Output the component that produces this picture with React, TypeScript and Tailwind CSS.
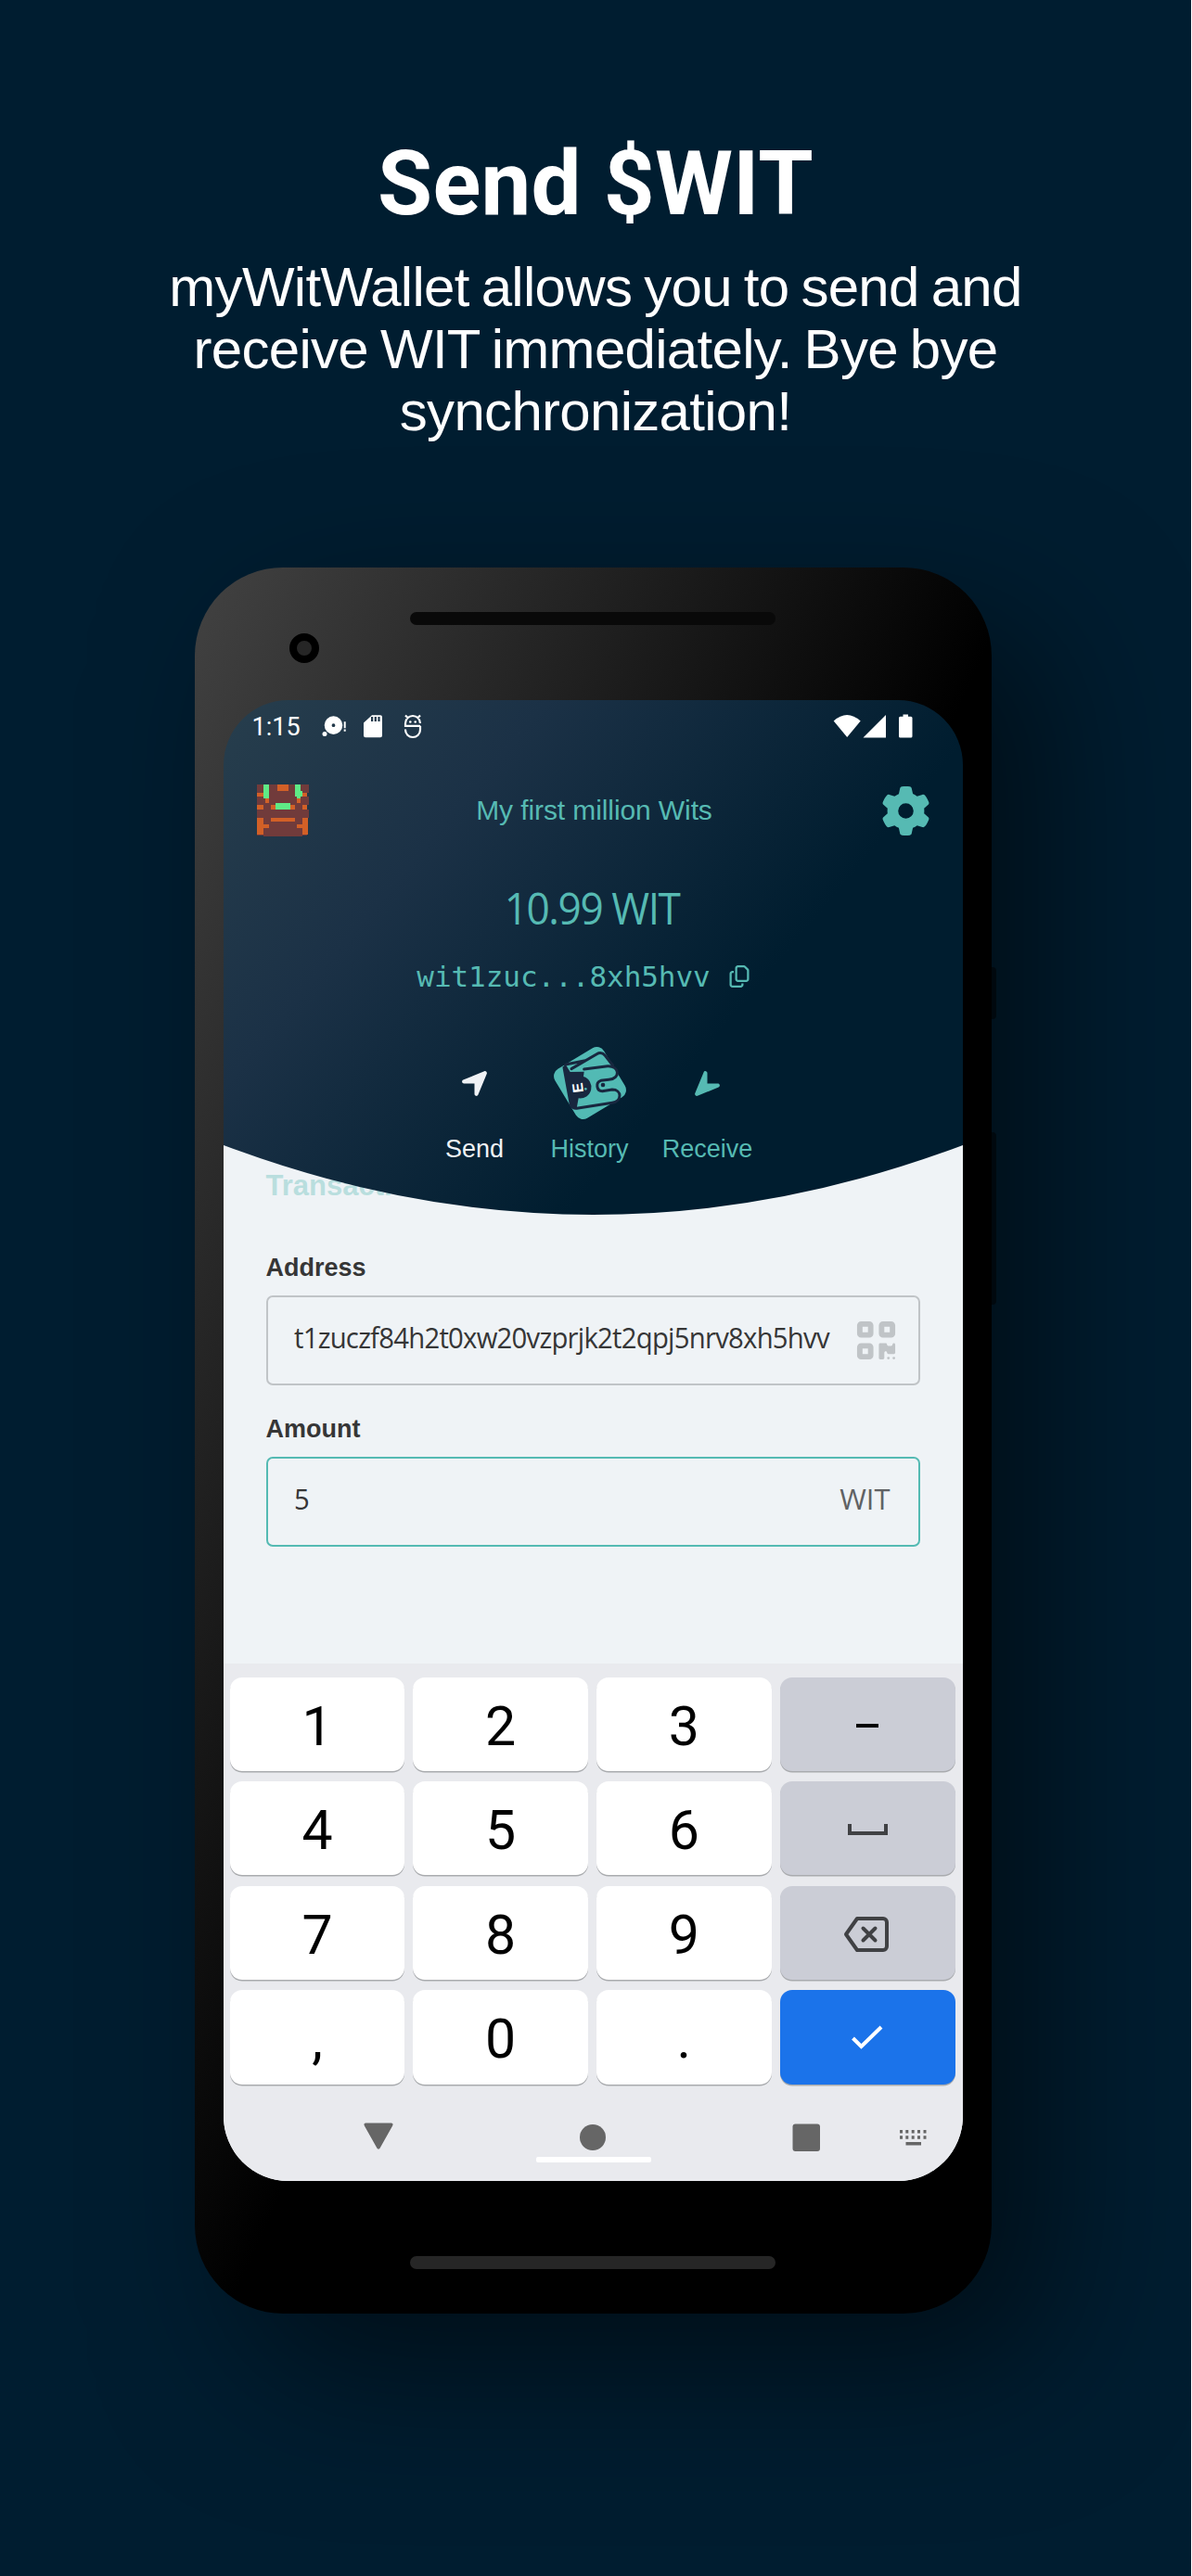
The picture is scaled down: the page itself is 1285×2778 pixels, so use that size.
import type { ReactNode } from 'react';
import { FaGear, FaLocationArrow, FaQrcode, FaRegCopy } from 'react-icons/fa6';

const SANS = "font-['Liberation_Sans',sans-serif]";

function Chest() {
  return (
    <svg width="58" height="58" viewBox="228 737 174 174" shapeRendering="crispEdges">
      <path fill="#713b3b" d="M230 740h168v26h-4v14h4v26h-4v14h4v28h-4v56h-15v5H252v-5h-22z" />
      <g fill="#d26027">
        <path d="M298 740h34v20h-34zM230 766h22v14h-22zM379 766h15v14h-15zM257 786h14v15h-14zM359 786h14v15h-14zM230 807h21v13h-21zM277 807h76v13h-76zM379 807h15v13h-15zM277 848h76v13h-76zM230 848h21v20h20v14h-20v21h-21zM379 848h16v55h-16v-21h-20v-14h20z" />
      </g>
      <path fill="#5fea86" d="M251 740h20v46h-20zM353 740h20v20h6v20h-6v6h-14v-6h-6zM291 801h47v20h-47z" />
    </svg>
  );
}

function StatusIcons() {
  return (
    <svg width="112" height="28" viewBox="0 0 112 28" fill="#fff">
      <path fillRule="evenodd" d="M12.500 2.300a9.800 9.800 0 1 1 0 19.600a9.800 9.800 0 0 1 0-19.600zm0 8a1.900 1.900 0 1 0 0 3.800a1.900 1.900 0 0 0 0-3.800z" />
      <circle cx="3" cy="21.500" r="2.500" />
      <path d="M23.700 8.300h2v7h-2zM23.700 16.500h2v2.200h-2z" />
      <path fillRule="evenodd" d="M54 1.300h9a2 2 0 0 1 2 2v20a2 2 0 0 1-2 2H47a2 2 0 0 1-2-2V9.500zM53 3v5h2.200V3zM56.700 3v5h2.200V3zM60.400 3v5h2.200V3z" />
      <g fill="none" stroke="#fff" strokeWidth="2.2">
        <path d="M106 12.800H90V10a8 8 0 0 1 16 0M90 16.500v.5a8 8 0 0 0 16 0v-4.200M90 1.500l3 3M106 1.500l-3 3" />
      </g>
      <circle cx="95.300" cy="8.500" r="1.300" />
      <circle cx="100.700" cy="8.500" r="1.300" />
    </svg>
  );
}

function SignalIcons() {
  return (
    <svg width="88" height="28" viewBox="0 0 88 28" fill="#fff">
      <path d="M.7 7.500Q15-5.500 29.700 7.500L15.200 25z" />
      <path d="M57 1v24.500H32.500z" />
      <path d="M75.500.5h5.500v2.300h3a1.500 1.500 0 0 1 1.500 1.500v19.700a1.500 1.500 0 0 1-1.500 1.500H72.500A1.500 1.500 0 0 1 71 24V4.300a1.500 1.500 0 0 1 1.500-1.500h3z" />
    </svg>
  );
}

function WalletLogo() {
  return (
    <svg width="84" height="84" viewBox="525 591 252 252">
      <rect x="558.5" y="624.5" width="185" height="185" rx="27" fill="#52bab4" transform="rotate(-31 651 717)" />
      <path d="M571 655q-5 2-4 12l22 121q3 10 13 12l6-1 6-33a36 36 0 0 0 16-70l2-16-45 1z" fill="#18273f" />
      <g fill="none" stroke="#18273f" strokeWidth="9" strokeLinecap="round" strokeLinejoin="round">
        <path d="M725 660l-25-32q-12-14-27-5l-82 48M572 657l64-13" />
        <path d="M632 672l76-10c40-2 42 42 4 44l-26 3c-18 6-14 34 5 34l32-5c32 0 32 38 0 43l-115 18q-14 1-19-12l-22-120" />
      </g>
      <circle cx="693" cy="723" r="7" fill="#18273f" />
      <circle cx="637" cy="736" r="4" fill="#52bab4" />
      <text x="0" y="0" transform="translate(630 746) rotate(-97)" fill="#fff" fontSize="48" fontWeight="700" fontFamily="Liberation Sans">E</text>
    </svg>
  );
}

function Key({ tone = 'bg-white', children }: { tone?: string; children: ReactNode }) {
  return (
    <button
      className={`flex items-center justify-center rounded-[13px] font-[Roboto,sans-serif] text-[59px] leading-none text-black shadow-[0_1.5px_0_#a9abae] ${tone}`}
    >
      {children}
    </button>
  );
}

const Digit = ({ children }: { children: string }) => <Key><span className="pt-[4px]">{children}</span></Key>;

function Keyboard() {
  return (
    <div className="flex h-[558px] flex-col bg-[#e9eaee] pt-[14.500px]">
      <div className="mr-[8px] ml-[7px] grid h-[439px] grid-cols-4 grid-rows-4 gap-x-[8.700px] gap-y-[11.300px]">
        <Digit>1</Digit>
        <Digit>2</Digit>
        <Digit>3</Digit>
        <Key tone="bg-[#cbcdd6]"><span className="mt-[4px] h-[4px] w-6 bg-black" /></Key>
        <Digit>4</Digit>
        <Digit>5</Digit>
        <Digit>6</Digit>
        <Key tone="bg-[#cbcdd6]">
          <span className="mt-[3px] h-[12px] w-[43px] border-4 border-t-0 border-[#404144]" />
        </Key>
        <Digit>7</Digit>
        <Digit>8</Digit>
        <Digit>9</Digit>
        <Key tone="bg-[#cbcdd6]">
          <svg className="mt-[3px] mr-[2px]" width="50" height="40" viewBox="0 0 50 40" fill="none" stroke="#404144" strokeWidth="4" strokeLinejoin="round">
            <path d="M15 3h28a4 4 0 0 1 4 4v26a4 4 0 0 1-4 4H15L3 20z" />
            <path d="M21.500 13.500l13 13M34.500 13.500l-13 13" strokeLinecap="round" />
          </svg>
        </Key>
        <Digit>,</Digit>
        <Digit>0</Digit>
        <Digit>.</Digit>
        <Key tone="bg-[#1b73ea]">
          <svg className="mt-[2px]" width="36" height="28" viewBox="0 0 36 28" fill="none" stroke="#fff" strokeWidth="4">
            <path d="M2.500 14l9 9L33 2" />
          </svg>
        </Key>
      </div>
      <svg className="mt-[28.500px]" width="797" height="70" viewBox="0 0 797 70" fill="#666">
        <path d="M153 13.500h28q2.500.5 1 3.200l-13.500 24q-1.500 1.800-3 0l-13.500-24q-1.500-2.700 1-3.200z" />
        <circle cx="398" cy="29" r="14" />
        <rect x="613.500" y="14.500" width="29.500" height="29.500" rx="3" />
        <path d="M729 21h3v3.500h-3zm6.300 0h3v3.500h-3zm6.400 0h3v3.500h-3zm6.300 0h3v3.500h-3zm6.500 0h3v3.500h-3zM729 27.300h3v3.500h-3zm6.300 0h3v3.500h-3zm6.400 0h3v3.500h-3zm6.300 0h3v3.500h-3zm6.500 0h3v3.500h-3zM735.500 34h16.500v3.500h-16.500z" />
        <rect x="337" y="50" width="124" height="6" rx="2" fill="#fff" />
      </svg>
    </div>
  );
}

function Header() {
  return (
    <header className="relative h-[555px] text-[#56bab3]">
      <span className={`${SANS} absolute top-[506px] left-[46px] text-[31px] leading-[36px] font-bold opacity-35`}>
        Transaction
      </span>
      <svg className="absolute inset-0" width="797" height="555" viewBox="0 0 797 555">
        <defs>
          <linearGradient id="header" gradientUnits="userSpaceOnUse" x1="0" y1="0" x2="490" y2="412">
            <stop offset="0" stopColor="#273e4d" />
            <stop offset=".42" stopColor="#1b3146" />
            <stop offset="1" stopColor="#001d2f" />
          </linearGradient>
        </defs>
        <path fill="url(#header)" d="M0 0h797v480Q398.500 630 0 480z" />
      </svg>
      <div className="relative flex h-full flex-col">
        <div className="flex h-[56px] items-center pt-[2px] pr-[52px] pl-[31px] text-white">
          <span className="w-[75px] font-[Roboto,sans-serif] text-[27px]">1:15</span>
          <StatusIcons />
          <span className="ml-auto"><SignalIcons /></span>
        </div>
        <div className="flex h-[126px] items-center justify-between pr-[35px] pl-[35px]">
          <Chest />
          <span className={`${SANS} pr-[2px] pb-[2px] text-[30px] tracking-[-0.100px]`}>My first million Wits</span>
          <FaGear size={55} className="w-[53px]" />
        </div>
        <p className="scale-x-[0.940] pr-[3px] text-center font-['Open_Sans',sans-serif] text-[47px] leading-[84px] tracking-[-1.500px]">10.99 WIT</p>
        <div className="flex h-[64px] items-center justify-center gap-[19px] pr-[20px]">
          <span className="pt-px font-['DejaVu_Sans_Mono',monospace] text-[31px] tracking-[-0.050px]">wit1zuc...8xh5hvv</span>
          <FaRegCopy size={24} />
        </div>
        <nav className={`${SANS} mt-[41px] flex justify-center pr-1 text-[27px]`}>
          <div className="flex w-[124px] flex-col items-center text-[#f0f2f5]">
            <span className="flex h-[84px] items-center"><FaLocationArrow size={33} /></span>
            <span className="mt-[9px]">Send</span>
          </div>
          <div className="flex w-[124px] flex-col items-center">
            <WalletLogo />
            <span className="mt-[9px]">History</span>
          </div>
          <div className="ml-[3px] flex w-[124px] flex-col items-center">
            <span className="flex h-[84px] items-center"><FaLocationArrow size={33} className="rotate-180" /></span>
            <span className="mt-[9px]">Receive</span>
          </div>
        </nav>
      </div>
    </header>
  );
}

function Form() {
  return (
    <form className={`${SANS} flex flex-1 flex-col px-[46px] pt-[37px] text-[#363636]`}>
      <label className="text-[27px] leading-[40px] font-bold">Address</label>
      <div className="mt-[10px] flex h-[97px] items-center justify-between rounded-[7px] border-2 border-[#c0c4c7] pr-[22px] pl-[28px]">
        <span className="w-[576px] origin-left scale-x-[0.945] pb-[7px] font-['Open_Sans',sans-serif] text-[31px] tracking-[-0.800px] whitespace-nowrap">
          t1zuczf84h2t0xw20vzprjk2t2qpj5nrv8xh5hvv
        </span>
        <FaQrcode size={47} className="shrink-0 text-[#c0c4c7]" />
      </div>
      <label className="mt-[27px] text-[27px] leading-[40px] font-bold">Amount</label>
      <div className="mt-[10px] flex h-[97px] items-center justify-between rounded-[7px] border-2 border-[#54bab3] pr-[30px] pb-[7px] pl-[28px] font-['Open_Sans',sans-serif] text-[31px]">
        <span className="origin-left scale-x-[0.943]">5</span>
        <span className="text-[#606264]">WIT</span>
      </div>
    </form>
  );
}

function Phone() {
  return (
    <div className="relative mt-[612px] ml-[209.500px] h-[1883px] w-[859.500px] rounded-[95px] bg-[linear-gradient(to_bottom_right,#424242,#3c3c3c_5%,#000_52%)] shadow-[60px_60px_160px_rgba(0,0,0,0.5)]">
      <span className="absolute top-[431px] left-full h-[56px] w-[5px] rounded-r-sm bg-black/50" />
      <span className="absolute top-[609px] left-full h-[186px] w-[5px] rounded-r-sm bg-black/50" />
      <span className="absolute top-[48px] left-[232px] h-[14px] w-[394px] rounded-full bg-[#090909]" />
      <span className="absolute top-[71px] left-[102px] size-[32px] rounded-full border-8 border-black bg-[#262626]" />
      <span className="absolute top-[1821px] left-[232px] h-[14px] w-[394px] rounded-full bg-[#262626]" />
      <div className="absolute top-[143px] left-[31px] flex h-[1597px] w-[797px] flex-col overflow-hidden rounded-[70px] bg-[linear-gradient(transparent_300px,#eff3f6_300px)]">
        <Header />
        <Form />
        <Keyboard />
      </div>
    </div>
  );
}

export default function App() {
  return (
    <main className="relative h-[2778px] w-[1285px] overflow-hidden border-r border-white bg-[#001d30]">
      <div className="absolute inset-x-0 top-0 text-center text-white">
        <h1 className="mt-[142px] font-[Roboto,sans-serif] text-[96px] leading-[112px] font-bold tracking-[0.200px]">Send $WIT</h1>
        <p className={`${SANS} mt-[22px] text-[60px] leading-[67px] tracking-[-0.700px] [word-spacing:-3px]`}>
          myWitWallet allows you to send and
          <br />
          receive WIT immediately. Bye bye
          <br />
          synchronization!
        </p>
      </div>
      <Phone />
    </main>
  );
}
